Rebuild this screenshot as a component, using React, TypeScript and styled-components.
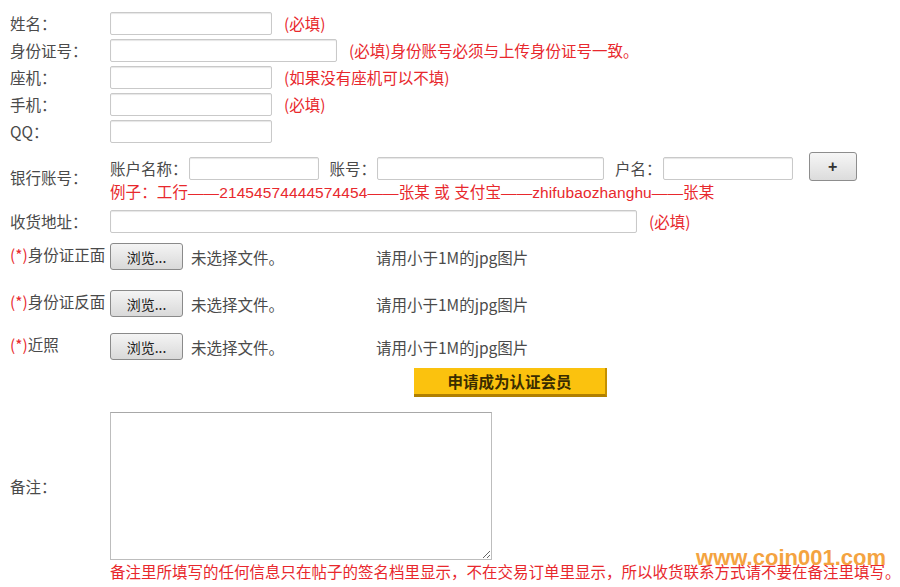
import styled, { createGlobalStyle } from 'styled-components'

const GlobalStyle = createGlobalStyle`
    html, body {
        margin: 0;
        padding: 0;
        background: #fff;
    }
    body {
        font-family: "Noto Sans CJK SC", "Liberation Sans", sans-serif;
        font-size: 15.5px;
        color: #4a4a4a;
    }
`

const Page = styled.div`
    position: relative;
    width: 900px;
    height: 587px;
    overflow: hidden;
    padding: 12px 0 0 10px;
    box-sizing: border-box;
`

const Row = styled.div<{ $mb?: number }>`
    display: flex;
    align-items: center;
    min-height: 23px;
    margin-bottom: ${(p) => p.$mb ?? 4}px;
    line-height: 23px;
`

const Label = styled.div<{ $top?: boolean }>`
    width: 100px;
    flex-shrink: 0;
    align-self: ${(p) => (p.$top ? 'flex-start' : 'center')};
    white-space: nowrap;
    line-height: 23px;
`

const Input = styled.input<{ $w: number }>`
    width: ${(p) => p.$w}px;
    height: 23px;
    box-sizing: border-box;
    border: 1px solid #c9c9c9;
    border-radius: 2px;
    box-shadow: inset 0 1px 1px #e6e6e6;
    margin: 0;
`

const Note = styled.span<{ $ml?: number }>`
    color: #e8282d;
    margin-left: ${(p) => p.$ml ?? 12}px;
    white-space: nowrap;
`

const Star = styled.span`
    color: #e8282d;
`

const BankBlock = styled.div`
    display: flex;
    flex-direction: column;
`

const BankLine = styled.div`
    display: flex;
    align-items: center;
    margin-top: 5px;
`

const SubLabel = styled.span<{ $ml?: number }>`
    margin-left: ${(p) => p.$ml ?? 0}px;
    margin-right: 1px;
    white-space: nowrap;
`

const PlusBtn = styled.button`
    width: 48px;
    height: 29px;
    margin-left: 16px;
    margin-top: -4px;
    border: 1px solid #8d8d8d;
    border-radius: 3px;
    background: linear-gradient(#f6f6f6, #dcdcdc);
    font-size: 16px;
    font-weight: bold;
    color: #333;
    font-family: "Liberation Sans", sans-serif;
    padding: 0;
`

const Example = styled.div`
    color: #e8282d;
    margin-top: 1px;
    line-height: 22px;
    white-space: nowrap;
    font-family: "Liberation Sans", "Noto Sans CJK SC", sans-serif;
    font-size: 15.5px;
    letter-spacing: 0.1px;
`

const FileRow = styled.div<{ $mb: number }>`
    display: flex;
    align-items: center;
    height: 27px;
    margin-bottom: ${(p) => p.$mb}px;
`

const BrowseBtn = styled.button`
    width: 73px;
    height: 27px;
    border: 1px solid #8a8a8a;
    border-radius: 3px;
    background: linear-gradient(#f4f4f4, #d9d9d9);
    font-family: "Noto Sans CJK SC", sans-serif;
    font-size: 14px;
    color: #222;
    padding: 0;
`

const FileText = styled.span`
    margin-left: 8px;
    width: 185px;
    white-space: nowrap;
`

const Hint = styled.span`
    white-space: nowrap;
`

const SubmitWrap = styled.div`
    padding-left: 404px;
    margin-bottom: 15px;
`

const Submit = styled.button`
    width: 193px;
    height: 29px;
    border: none;
    border-right: 2px solid #c49000;
    border-bottom: 3px solid #b07f00;
    background: #fbc20e;
    color: #3a2c00;
    font-family: "Noto Sans CJK SC", sans-serif;
    font-size: 15.5px;
    font-weight: bold;
    padding: 0;
`

const TextArea = styled.textarea`
    width: 382px;
    height: 148px;
    box-sizing: border-box;
    border: 1px solid #bdbdbd;
    border-top-color: #a8a8a8;
    margin: 0;
    resize: both;
`

const Footer = styled.div`
    padding-left: 100px;
    color: #e8282d;
    font-size: 15.5px;
    line-height: 22px;
    white-space: nowrap;
`

const Watermark = styled.div`
    position: absolute;
    right: 14px;
    bottom: 16px;
    color: #f39a2c;
    font-family: "Liberation Sans", sans-serif;
    font-weight: bold;
    font-size: 22px;
    opacity: 0.9;
`

const fileRows = [
    { label: '身份证正面', mb: 20 },
    { label: '身份证反面', mb: 16 },
    { label: '近照', mb: 8 },
]

export default function App() {
    return (
        <Page>
            <GlobalStyle />
            <Row>
                <Label>姓名：</Label>
                <Input $w={162} />
                <Note>(必填)</Note>
            </Row>
            <Row>
                <Label>身份证号：</Label>
                <Input $w={227} />
                <Note>(必填)身份账号必须与上传身份证号一致。</Note>
            </Row>
            <Row>
                <Label>座机：</Label>
                <Input $w={162} />
                <Note>(如果没有座机可以不填)</Note>
            </Row>
            <Row>
                <Label>手机：</Label>
                <Input $w={162} />
                <Note>(必填)</Note>
            </Row>
            <Row $mb={8}>
                <Label>QQ：</Label>
                <Input $w={162} />
            </Row>
            <Row $mb={6}>
                <Label>银行账号：</Label>
                <BankBlock>
                    <BankLine>
                        <SubLabel>账户名称：</SubLabel>
                        <Input $w={130} />
                        <SubLabel $ml={11}>账号：</SubLabel>
                        <Input $w={227} />
                        <SubLabel $ml={11}>户名：</SubLabel>
                        <Input $w={130} />
                        <PlusBtn>+</PlusBtn>
                    </BankLine>
                    <Example>例子：工行——21454574444574454——张某 或 支付宝——zhifubaozhanghu——张某</Example>
                </BankBlock>
            </Row>
            <Row $mb={10}>
                <Label>收货地址：</Label>
                <Input $w={527} />
                <Note>(必填)</Note>
            </Row>
            {fileRows.map((r) => (
                <FileRow key={r.label} $mb={r.mb}>
                    <Label $top>
                        <Star>(*)</Star>
                        {r.label}
                    </Label>
                    <BrowseBtn>浏览...</BrowseBtn>
                    <FileText>未选择文件。</FileText>
                    <Hint>请用小于1M的jpg图片</Hint>
                </FileRow>
            ))}
            <SubmitWrap>
                <Submit>申请成为认证会员</Submit>
            </SubmitWrap>
            <Row $mb={0}>
                <Label>备注：</Label>
                <TextArea />
            </Row>
            <Footer>备注里所填写的任何信息只在帖子的签名档里显示，不在交易订单里显示，所以收货联系方式请不要在备注里填写。</Footer>
            <Watermark>www.coin001.com</Watermark>
        </Page>
    )
}
